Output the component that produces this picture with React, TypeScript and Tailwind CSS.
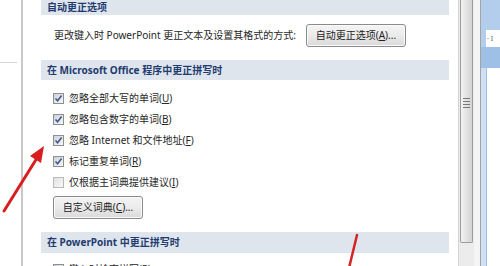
const font = "font-['Noto_Sans','Noto_Sans_CJK_SC',sans-serif]";

const Mn = ({ k }: { k: string }) => (
  <span>
    (<span className="underline underline-offset-1">{k}</span>)
  </span>
);

const CheckBox = ({ checked }: { checked: boolean }) =>
  checked ? (
    <span className="w-[11px] h-[11px] border border-[#8e8f8f] bg-gradient-to-br from-[#cdd2d9] to-[#f7f7f7] flex items-center justify-center shrink-0">
      <svg width="9" height="9" viewBox="0 0 9 9">
        <path d="M1.5 4.5 L3.6 6.8 L7.6 1.6" fill="none" stroke="#40598a" strokeWidth="1.6" />
      </svg>
    </span>
  ) : (
    <span className="w-[11px] h-[11px] border border-[#b9b9b9] bg-gradient-to-br from-[#e2e2e2] to-[#f8f8f8] shrink-0"></span>
  );

const WinButton = ({ children, w }: { children: React.ReactNode; w: string }) => (
  <div
    className={`${w} h-[23px] rounded-[3px] border border-[#8a8a8a] bg-gradient-to-b from-[#f4f4f4] via-[#ebebeb] to-[#d9d9d9] flex items-center justify-center text-[10px] text-[#222] shadow-[inset_0_0_0_1px_#fbfbfb]`}
  >
    {children}
  </div>
);

const SectionHead = ({ children, h }: { children: React.ReactNode; h: string }) => (
  <div className={`${h} bg-[#dee5ed] flex items-center pl-[6px] text-[10px] font-bold text-[#1f3b6f]`}>
    {children}
  </div>
);

const rows: { label: React.ReactNode; checked: boolean }[] = [
  { label: <>忽略全部大写的单词<Mn k="U" /></>, checked: true },
  { label: <>忽略包含数字的单词<Mn k="B" /></>, checked: true },
  { label: <>忽略 Internet 和文件地址<Mn k="F" /></>, checked: true },
  { label: <>标记重复单词<Mn k="R" /></>, checked: true },
  { label: <>仅根据主词典提供建议<Mn k="I" /></>, checked: false },
];

export default function App() {
  return (
    <div className={`relative w-[500px] h-[266px] overflow-hidden bg-white flex ${font}`}>
      {/* left pane */}
      <div className="w-[21px] shrink-0">
        <div className="w-[17px] h-px mt-[62px] bg-[#d6d6d6]"></div>
      </div>
      <div className="w-[2px] shrink-0 bg-[#c8c8c8]"></div>

      {/* options content */}
      <div className="w-[435px] shrink-0 pl-[18px] pr-[9px] flex flex-col text-[10px] text-[#262626]">
        <SectionHead h="h-[18px]">自动更正选项</SectionHead>

        <div className="mt-[9px] h-[23px] flex items-center pl-[13px]">
          <span>更改键入时 PowerPoint 更正文本及设置其格式的方式:</span>
          <div className="ml-[10px]">
            <WinButton w="w-[100px]">
              自动更正选项<Mn k="A" />...
            </WinButton>
          </div>
        </div>

        <div className="mt-[13px]">
          <SectionHead h="h-[20px]">在 Microsoft Office 程序中更正拼写时</SectionHead>
        </div>

        <div className="mt-[8px] flex flex-col pl-[12px]">
          {rows.map((r, i) => (
            <div key={i} className="h-[21px] flex items-center gap-[5px]">
              <CheckBox checked={r.checked} />
              <span>{r.label}</span>
            </div>
          ))}
        </div>

        <div className="mt-[3px] pl-[12px]">
          <WinButton w="w-[90px]">
            自定义词典<Mn k="C" />...
          </WinButton>
        </div>

        <div className="mt-[13px]">
          <SectionHead h="h-[21px]">在 PowerPoint 中更正拼写时</SectionHead>
        </div>

        <div className="mt-[9px] pl-[12px] h-[21px] flex items-center gap-[5px]">
          <CheckBox checked={true} />
          <span>键入时检查拼写<Mn k="P" /></span>
        </div>
      </div>

      {/* scrollbar */}
      <div className="w-[16px] shrink-0 bg-[#ececec] border-l border-[#d4d4d4] flex flex-col">
        <div className="ml-[1px] w-[13px] h-[243px] border border-t-0 border-[#9c9c9c] rounded-b-[2px] bg-gradient-to-r from-[#f3f3f3] to-[#d3d3d3] flex flex-col items-center">
          <div className="mt-[98px] flex flex-col gap-[2px]">
            {[0, 1, 2, 3].map((i) => (
              <div key={i} className="w-[7px] h-px bg-[#777]"></div>
            ))}
          </div>
        </div>
      </div>

      {/* gap + border */}
      <div className="w-[7px] shrink-0 bg-[#f4f4f4] border-r border-[#a3a3a3]"></div>

      {/* slide pane edge */}
      <div className="flex-1 flex flex-col">
        <div className="h-[30px] bg-[#b3cdec]"></div>
        <div className="h-[17px] flex">
          <div className="w-[5px] bg-[#b3cdec]"></div>
          <div className="flex-1 bg-white text-[7px] text-[#666] leading-[17px] pl-[1px]">· I</div>
        </div>
        <div className="h-[21px] bg-[#9ebfe6]"></div>
        <div className="flex-1 flex">
          <div className="w-[6px] bg-[#cfe0f5] border-r border-[#9dbde4]"></div>
          <div className="flex-1 bg-white"></div>
        </div>
      </div>

      {/* red annotation arrows */}
      <svg className="absolute inset-0 pointer-events-none" width="500" height="266" viewBox="0 0 500 266">
        <line x1="4" y1="211" x2="37" y2="158" stroke="#d81e1e" strokeWidth="3" strokeLinecap="round" />
        <polygon points="44,146 41,163 30,156" fill="#d81e1e" />
        <line x1="357" y1="235" x2="349" y2="268" stroke="#d42424" strokeWidth="2.5" strokeLinecap="round" />
      </svg>
    </div>
  );
}
